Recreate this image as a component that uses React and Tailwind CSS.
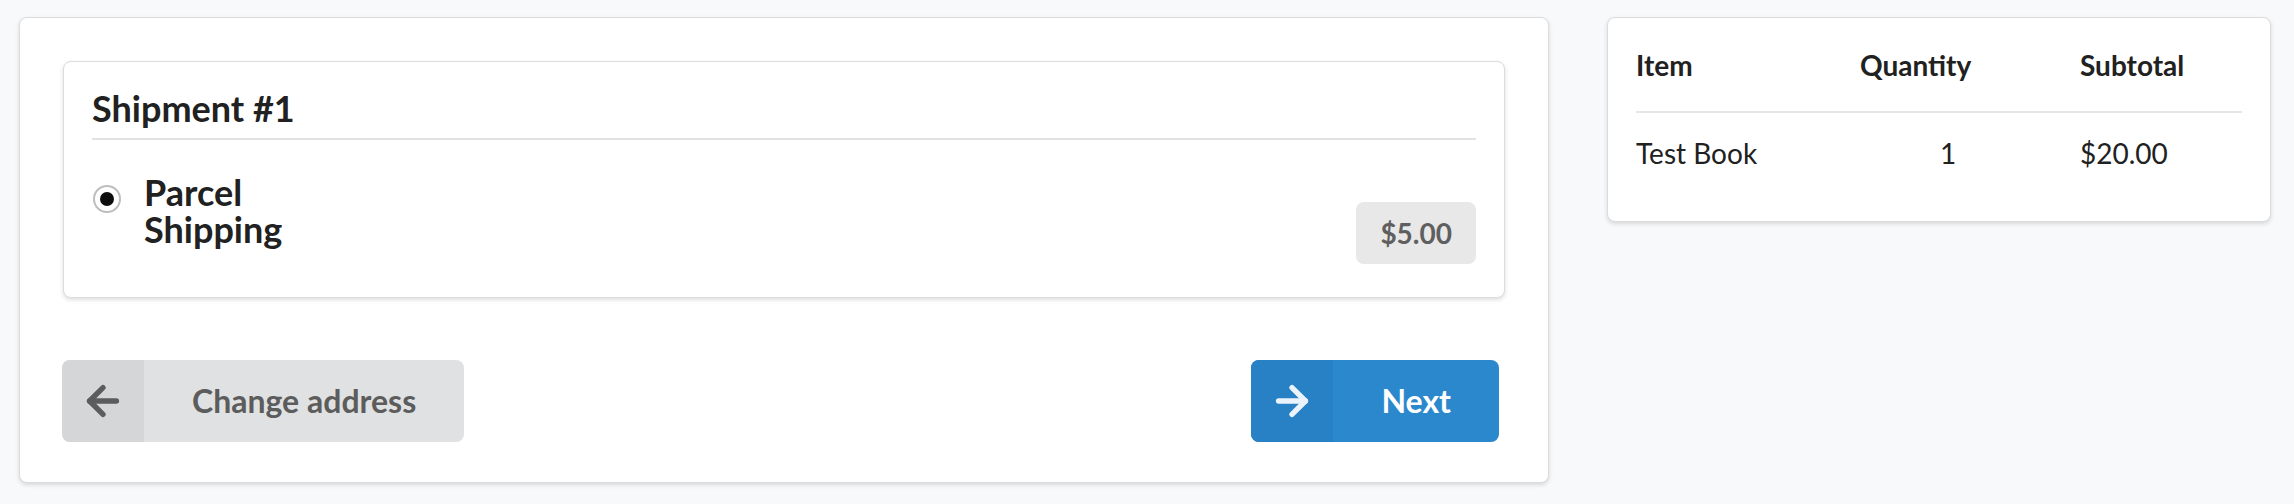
import { ArrowLeft, ArrowRight } from "lucide-react"

const items = [{ name: "Test Book", qty: 1, subtotal: "$20.00" }];

const App = () => {
    return (
        <div className="min-h-screen bg-[#f8f9fa] font-['Lato',sans-serif] text-[#212121] pt-[17px] pl-[19px] flex items-start gap-[58px]">
            {/* shipping panel */}
            <div className="w-[1530px] bg-white border border-[#dcdcdd] rounded-[8px] shadow-[0_2px_4px_0_rgba(34,36,38,0.15)] px-[43px] pt-[43px] pb-[40px]">
                <div className="bg-white border border-[#dcdcdd] rounded-[8px] shadow-[0_2px_4px_0_rgba(34,36,38,0.15)] p-[28px]">
                    <h3 className="text-[36px] leading-[36px] font-bold pb-[12px] border-b-2 border-[#e2e2e3]">Shipment #1</h3>
                    <div className="flex justify-between items-start pb-[5px]">
                        <label className="flex items-start pt-[34px] gap-[23px] cursor-pointer">
                            <span className="mt-[11px] ml-[1px] w-[28px] h-[28px] rounded-full border-2 border-[#bdbebf] bg-white flex items-center justify-center">
                                <span className="w-[14px] h-[14px] rounded-full bg-[#0d0d0d]"></span>
                            </span>
                            <span className="w-[160px] text-[36px] leading-[37px] font-bold">Parcel Shipping</span>
                        </label>
                        <div className="mt-[62px] bg-[#e8e8e8] rounded-[8px] px-[24px] h-[62px] flex items-center text-[28px] font-bold text-[#5f5f5f]">
                            $5.00
                        </div>
                    </div>
                </div>
                <div className="flex justify-between mt-[62px]">
                    <button className="-ml-[1px] flex h-[82px] rounded-[8px] overflow-hidden bg-[#e0e1e2] text-[#5c5c5c]">
                        <span className="w-[82px] h-full flex items-center justify-center bg-[#d5d6d7]">
                            <ArrowLeft size={46} strokeWidth={2.8} />
                        </span>
                        <span className="px-[48px] h-full flex items-center text-[32px] leading-none font-bold">Change address</span>
                    </button>
                    <button className="mr-[6px] flex h-[82px] rounded-[8px] overflow-hidden bg-[#2b88cd] text-white">
                        <span className="w-[82px] h-full flex items-center justify-center bg-[#2880c5] text-[#eaf3fb]">
                            <ArrowRight size={46} strokeWidth={2.8} />
                        </span>
                        <span className="px-[48px] h-full flex items-center text-[32px] leading-none font-bold">Next</span>
                    </button>
                </div>
            </div>

            {/* order summary */}
            <div className="w-[664px] bg-white border border-[#dcdcdd] rounded-[8px] shadow-[0_2px_4px_0_rgba(34,36,38,0.15)] px-[28px] pt-[27px] pb-[27px]">
                <div className="grid grid-cols-[180px_176px_1fr] gap-x-[44px] text-[28px] leading-[40px] font-bold pb-[26px] border-b-2 border-[#e6e6e6]">
                    <div>Item</div>
                    <div>Quantity</div>
                    <div>Subtotal</div>
                </div>
                {items.map((item) => (
                    <div key={item.name} className="grid grid-cols-[180px_176px_1fr] gap-x-[44px] text-[28px] leading-[40px] pt-[20px] pb-[21px]">
                        <div>{item.name}</div>
                        <div className="text-center">{item.qty}</div>
                        <div>{item.subtotal}</div>
                    </div>
                ))}
            </div>
        </div>
    );
};

export default App;
